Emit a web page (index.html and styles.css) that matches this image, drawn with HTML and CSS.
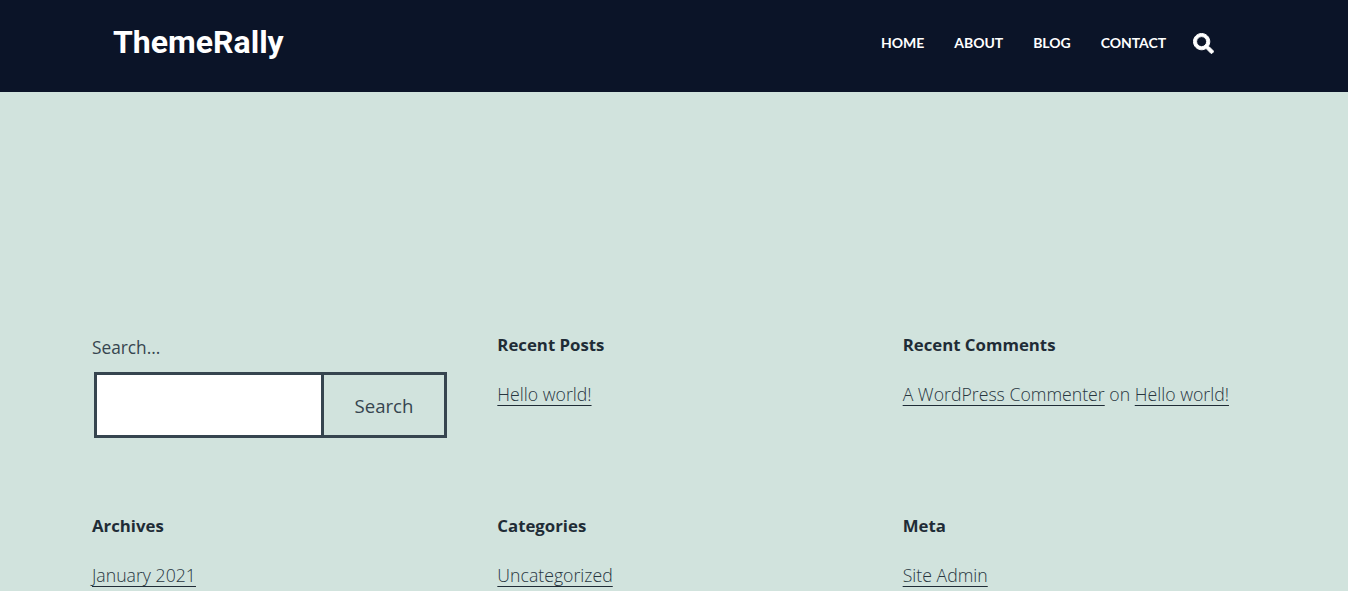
FILE: index.html
```html
<!DOCTYPE html>
<html lang="en">
<head>
<meta charset="utf-8">
<title>ThemeRally</title>
<link rel="stylesheet" href="styles.css">
</head>
<body>
<header class="site-header">
  <a class="logo" href="#">ThemeRally</a>
  <nav class="nav">
    <a href="#">Home</a>
    <a href="#">About</a>
    <a href="#">Blog</a>
    <a href="#">Contact</a>
  </nav>
  <svg class="search-icon" viewBox="-12 -12 536 536" aria-hidden="true"><path d="M505 442.700L405.300 343c-4.500-4.500-10.600-7-17-7H372c27.600-35.300 44-79.700 44-128C416 93.100 322.900 0 208 0S0 93.100 0 208s93.100 208 208 208c48.300 0 92.700-16.400 128-44v16.300c0 6.400 2.500 12.500 7 17l99.700 99.700c9.400 9.400 24.600 9.400 33.900 0l28.300-28.300c9.400-9.400 9.400-24.600.1-34zM208 336c-70.700 0-128-57.200-128-128 0-70.700 57.200-128 128-128 70.700 0 128 57.200 128 128 0 70.700-57.200 128-128 128z"/></svg>
</header>
<main class="widgets">
  <section class="widget">
    <label class="search-label" for="s">Search...</label>
    <form class="search-form">
      <input class="search-input" id="s" type="text">
      <button class="search-button" type="button">Search</button>
    </form>
  </section>
  <section class="widget">
    <h2>Recent Posts</h2>
    <p><a href="#">Hello world!</a></p>
  </section>
  <section class="widget">
    <h2>Recent Comments</h2>
    <p><a href="#">A WordPress Commenter</a> on <a href="#">Hello world!</a></p>
  </section>
  <section class="widget">
    <h2>Archives</h2>
    <p><a href="#">January 2021</a></p>
  </section>
  <section class="widget">
    <h2>Categories</h2>
    <p><a href="#">Uncategorized</a></p>
  </section>
  <section class="widget">
    <h2>Meta</h2>
    <p><a href="#">Site Admin</a></p>
  </section>
</main>
</body>
</html>
```
FILE: styles.css
```css
html, body { margin: 0; height: 591px; overflow: hidden; }
body {
  background: #d1e3dd;
  color: #36454f;
  font-family: "Open Sans", "Noto Sans", sans-serif;
  font-size: 18px;
}
a { color: inherit; }
.site-header {
  height: 92px;
  background: #0b1428;
  display: flex;
  align-items: center;
  padding: 0 134px 0 113px;
  box-sizing: border-box;
}
.logo {
  font-family: Roboto, sans-serif;
  font-weight: 700;
  font-size: 32px;
  color: #fff;
  text-decoration: none;
  margin-right: auto;
  margin-top: -8px;
}
.nav { display: flex; gap: 30px; margin-top: -8px; }
.nav a {
  font-family: Lato, sans-serif;
  font-weight: 700;
  font-size: 14px;
  letter-spacing: -0.04px;
  text-transform: uppercase;
  color: #fff;
  text-decoration: none;
}
.search-icon { width: 21px; height: 21px; fill: #fff; stroke: #fff; stroke-width: 24px; margin-left: 27px; margin-top: -6px; }
.widgets {
  display: grid;
  grid-template-columns: repeat(3, 405.33px);
  grid-auto-rows: 181px;
  padding: 241px 0 0 92px;
}
.widget h2 {
  margin: 0 0 24px;
  font-size: 16.8px;
  line-height: 23px;
  font-weight: 700;
  color: #1f2c36;
  padding-bottom: 1px;
}
.widget p { margin: 0; font-weight: 300; font-size: 17.7px; line-height: 26px; color: #28363f; }
.widget p a {
  text-decoration: underline 1px #1f2c36;
  text-decoration-skip-ink: none;
  text-underline-offset: 4px;
}
.search-label { display: block; font-size: 17.3px; line-height: 24px; margin-top: 3px; }
.search-form { display: flex; width: 353px; height: 66px; margin: 12px 0 0 2px; }
.search-input {
  width: 227px;
  box-sizing: border-box;
  background: #fff;
  border: 3px solid #36454f;
  border-right: 0;
  padding: 0;
  border-radius: 0;
}
.search-button {
  flex: 1;
  background: transparent;
  border: 3px solid #36454f;
  border-radius: 0;
  color: #36454f;
  font: 500 18.6px "Open Sans", "Noto Sans", sans-serif;
  padding: 0;
}
```
